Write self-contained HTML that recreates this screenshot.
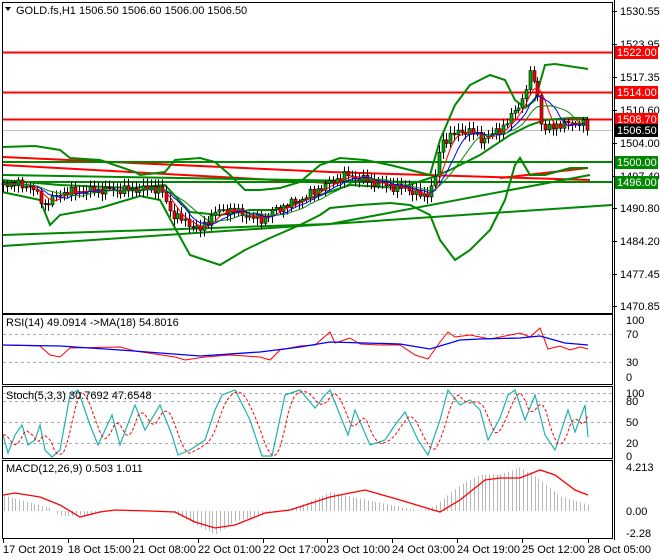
<!DOCTYPE html>
<html><head><meta charset="utf-8"><style>
body{margin:0;background:#fff;}
svg{display:block;font-family:"Liberation Sans",sans-serif;font-size:11px;}
</style></head><body>
<svg id="s" width="660" height="560" viewBox="0 0 660 560" xmlns="http://www.w3.org/2000/svg">
<rect width="660" height="560" fill="#fff"/>
<g id="main"></g>
<g id="ind"></g>
<g fill="none" stroke="#000" stroke-width="1">
<rect x="2.5" y="2.5" width="610" height="311"/>
<rect x="2.5" y="314.5" width="610" height="70"/>
<rect x="2.5" y="386.5" width="610" height="72"/>
<rect x="2.5" y="460.5" width="610" height="78"/>
<line x1="614.5" y1="0" x2="614.5" y2="540"/>
</g>
<g id="axis"></g>
<text x="16" y="14" fill="#000">GOLD.fs,H1  1506.50 1506.60 1506.00 1506.50</text>
<path d="M5 7 L11 7 L8 11 Z" fill="#000"/>
<text x="6" y="326">RSI(14) 49.0914  -&gt;MA(18) 54.8016</text>
<text x="6" y="399">Stoch(5,3,3) 30.7692 47.6548</text>
<text x="6" y="472">MACD(12,26,9) 0.503 1.011</text>
</svg>
<script>
var NS="http://www.w3.org/2000/svg";
function el(p,t,a,txt){var e=document.createElementNS(NS,t);for(var k in a)e.setAttribute(k,a[k]);if(txt!==undefined)e.textContent=txt;document.getElementById(p).appendChild(e);return e;}
function interp(pts,x){if(x<=pts[0][0])return pts[0][1];for(var i=1;i<pts.length;i++){if(x<=pts[i][0]){var a=pts[i-1],b=pts[i];return a[1]+(b[1]-a[1])*(x-a[0])/(b[0]-a[0]);}}return pts[pts.length-1][1];}
function pl(p,pts,col,w,dash){el(p,'polyline',{points:pts.map(function(q){return q[0]+','+q[1]}).join(' '),fill:'none',stroke:col,'stroke-width':w,'stroke-dasharray':dash||'none'});}
function ln(p,x1,y1,x2,y2,col,w,dash){el(p,'line',{x1:x1,y1:y1,x2:x2,y2:y2,stroke:col,'stroke-width':w,'stroke-dasharray':dash||'none'});}
// horizontal & trend lines
ln('main',3,52.5,612,52.5,'#f00',2);ln('main',3,92.5,612,92.5,'#f00',2);ln('main',3,119.5,612,119.5,'#f00',2);
ln('main',3,130.5,612,130.5,'#c0c0c0',1);
ln('main',3,157,330,172,'#f00',2);ln('main',330,172,590,180,'#f00',2);
ln('main',3,165,330,183,'#f00',2);
ln('main',3,175,420,182,'#080',2);
ln('main',3,246,612,205,'#080',2);ln('main',3,235,330,224,'#080',2);ln('main',330,224,590,175,'#080',2);
ln('main',3,162,612,162,'#080',2);ln('main',3,182,612,182,'#080',2);
ln('main',500,178,588,168,'#f00',2);
// bollinger
var up=[[2,147],[35,146],[60,150],[70,158],[100,160],[135,172],[140,175],[165,172],[175,160],[200,158],[215,162],[230,175],[245,190],[260,190],[280,188],[300,182],[320,165],[340,158],[365,160],[390,165],[410,170],[430,175],[440,140],[455,105],[470,85],[490,75],[505,80],[515,100],[525,108],[535,100],[545,65],[555,64],[588,69]];
var lo=[[2,192],[40,200],[50,225],[60,215],[100,208],[140,196],[160,200],[175,228],[190,255],[220,265],[245,250],[270,238],[300,225],[320,215],[330,208],[360,205],[390,203],[410,205],[430,215],[440,240],[455,260],[470,250],[490,230],[505,200],[515,165],[520,158],[530,175],[545,175],[570,168],[588,168]];
var md=[[2,180],[60,185],[130,188],[165,185],[190,212],[220,215],[250,210],[275,210],[320,195],[350,185],[400,188],[430,178],[450,170],[480,155],[510,135],[530,125],[545,120],[570,118],[588,118]];
pl('main',up,'#080',2);pl('main',lo,'#080',2);pl('main',md,'#080',2);
// candles
var cp=[[3,183],[30,186],[45,205],[60,193],[100,190],[130,190],[160,188],[170,212],[185,222],[200,230],[215,212],[230,210],[260,220],[275,210],[300,200],[320,188],[345,175],[380,184],[410,190],[425,198],[435,178],[440,145],[450,135],[470,130],[480,140],[500,130],[510,118],[522,100],[530,75],[536,82],[540,120],[545,130],[555,125],[570,124],[580,122],[588,128]];
var N=155,closes=[],xs=[];
for(var i=0;i<N;i++){var x=3+i*3.79;xs.push(x);closes.push(interp(cp,x)+Math.sin(i*2.7)*3+Math.sin(i*1.3)*2);}
closes[N-1]=130;
for(var i=0;i<N;i++){var x=Math.round(xs[i])+0.5,c=closes[i],o=i?closes[i-1]:c+2;var hi=Math.min(o,c)-2-Math.abs(Math.sin(i*3.1))*5,lw=Math.max(o,c)+2+Math.abs(Math.cos(i*2.3))*5;
ln('main',x,hi,x,lw,'#000',1);var t=Math.min(o,c),h=Math.max(1,Math.abs(o-c));
el('main','rect',{x:x-1.5,y:t,width:3,height:h,fill:c<o?'#0a0':'#f00',stroke:'#000','stroke-width':0.6});}
function ma(n){var r=[];for(var i=0;i<N;i++){var s=0,k=0;for(var j=Math.max(0,i-n+1);j<=i;j++){s+=closes[j];k++;}r.push([xs[i],s/k]);}return r;}
pl('main',ma(5),'#f00',1);pl('main',ma(8),'#00f',1);pl('main',ma(12),'#080',1);
// RSI
ln('ind',3,334.5,612,334.5,'#aaa',1,'3,3');ln('ind',3,362.5,612,362.5,'#aaa',1,'3,3');
pl('ind',[[3,345],[40,346],[50,355],[60,357],[70,348],[120,347],[135,351],[175,357],[185,360],[205,357],[230,355],[260,357],[270,360],[280,350],[300,346],[315,345],[330,332],[335,343],[350,338],[360,344],[380,345],[400,345],[415,355],[428,359],[440,342],[448,332],[455,337],[470,335],[490,339],[510,335],[520,333],[530,337],[540,328],[548,349],[560,346],[570,350],[580,347],[588,349]],'#f00',1);
pl('ind',[[3,345],[60,346],[120,350],[200,356],[260,352],[300,347],[330,342],[400,344],[430,349],[460,340],[480,339],[520,338],[540,336],[565,343],[588,345]],'#00f',1.3);
// Stoch
[401.5,422.5,443.5,393.5].forEach(function(y){ln('ind',3,y,612,y,'#aaa',1,'3,3');});
var st=[[3,435],[8,453],[15,435],[22,425],[28,445],[35,440],[40,425],[45,450],[52,457],[60,450],[70,395],[78,390],[90,425],[98,445],[112,415],[120,445],[135,405],[145,430],[160,405],[172,435],[178,455],[190,450],[205,440],[215,410],[222,395],[235,390],[250,420],[262,456],[272,456],[285,395],[300,390],[315,408],[325,395],[330,390],[340,415],[348,435],[355,410],[370,445],[385,440],[395,425],[405,412],[418,440],[428,455],[440,420],[448,390],[460,405],[470,400],[480,410],[488,440],[500,418],[508,395],[515,390],[525,420],[535,395],[545,435],[555,450],[568,410],[575,432],[585,405],[588,437]];
pl('ind',st,'#20b2aa',1.2);
var sg=[];for(var x=3;x<=588;x+=3){var v=(interp(st,x-3)+interp(st,x-7)+interp(st,x-11))/3;sg.push([x,v]);}
pl('ind',sg,'#f00',1,'3,2');
// MACD
var hv=[[3,1.5],[50,0.3],[60,-0.5],[90,-0.4],[100,0],[170,0],[180,-0.5],[215,-2.3],[235,-1],[300,0.5],[330,1.8],[360,1.2],[420,0],[435,0.5],[460,2.5],[480,3.5],[500,3.5],[520,4.2],[540,3],[560,1.4],[588,0.6]];
for(var x=4;x<=588;x+=3.79){var v=interp(hv,x);var y0=511,y1=511-v*10.4;var xx=Math.round(x)+0.5;ln('ind',xx,Math.min(y0,y1),xx,Math.max(y0,y1),'#b8b8b8',1);}
pl('ind',[[3,495],[15,493],[40,497],[60,505],[80,517],[100,512],[115,510],[150,511],[175,512],[195,522],[215,528],[235,525],[265,513],[290,510],[330,497],[365,490],[400,500],[440,512],[460,500],[485,480],[500,478],[520,478],[540,470],[555,475],[575,490],[588,495]],'#f00',1.3);
// axis labels
[[1530.55,11],[1523.95,44],[1517.35,77],[1510.60,110],[1504.00,143],[1497.40,176],[1490.80,208],[1484.20,241],[1477.45,274],[1470.85,306]].forEach(function(a){ln('axis',612,a[1]+0.5,617,a[1]+0.5,'#000',1);el('axis','text',{x:620,y:a[1]+4},a[0].toFixed(2));});
[[1522.00,52,'#f00','#fff'],[1514.00,92,'#f00','#fff'],[1508.70,119,'#f00','#fff'],[1506.50,130,'#000','#fff'],[1500.00,162,'#080','#fff'],[1496.00,182,'#080','#fff']].forEach(function(a){el('axis','rect',{x:615,y:a[1]-6,width:43,height:13,fill:a[2]});el('axis','text',{x:617,y:a[1]+4,fill:a[3]},a[0].toFixed(2));});
[['100',320],['70',334],['30',362],['0',377],['100',393],['80',401],['50',422],['20',443],['0',456],['4.213',467],['0.00',511],['-2.28',533]].forEach(function(a){el('axis','text',{x:626,y:a[1]+4},a[0]);});
var tl=['17 Oct 2019','18 Oct 15:00','21 Oct 08:00','22 Oct 01:00','22 Oct 17:00','23 Oct 10:00','24 Oct 03:00','24 Oct 19:00','25 Oct 12:00','28 Oct 05:00'];
var tx=[3,68,133,198,263,327,392,457,522,588];
tl.forEach(function(t,i){ln('axis',tx[i]+0.5,538,tx[i]+0.5,543,'#000',1);el('axis','text',{x:tx[i],y:553},t);});
</script>
</body></html>
